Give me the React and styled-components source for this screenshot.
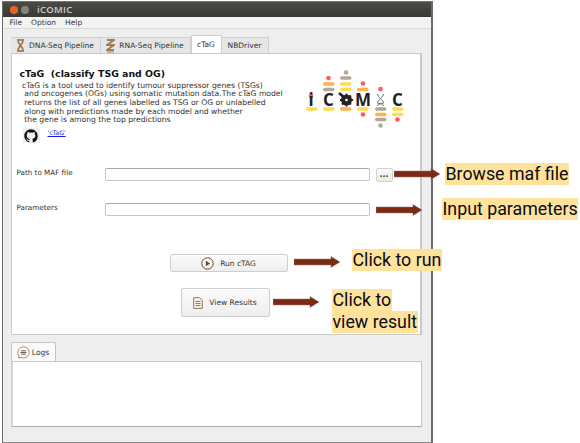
import React from "react";
import styled, { createGlobalStyle } from "styled-components";

const Global = createGlobalStyle`
  html, body { margin: 0; padding: 0; background: #fff; }
  body { width: 580px; height: 443px; overflow: hidden; font-family: "DejaVu Sans", sans-serif; position: relative; }
`;
const Page = styled.div`
  position: relative;
  width: 580px;
  height: 443px;
  padding: 1px 0 0 2px;
  box-sizing: border-box;
`;
const Win = styled.div`
  width: 431px;
  height: 442px;
  box-sizing: border-box;
  border-left: 1.5px solid #6b6b6b;
  border-right: 2.5px solid #6b6b6b;
  border-bottom: 1px solid #8a8a8a;
  background: #eeeeee;
  display: flex;
  flex-direction: column;
`;
const TitleBar = styled.div`
  height: 16px;
  flex: none;
  display: flex;
  align-items: center;
  background: linear-gradient(#4c4a44, #3a3934);
  border-top: 1px solid #77756f;
  box-sizing: border-box;
`;
const WinDot = styled.span`
  width: 8px;
  height: 8px;
  border-radius: 50%;
  background: ${(p) => p.$c};
  margin-left: ${(p) => p.$ml}px;
`;
const TitleText = styled.span`
  margin-left: 8px;
  color: #cfcdc5;
  font: 600 9.5px "Open Sans", sans-serif;
  letter-spacing: 0.3px;
`;
const MenuBar = styled.div`
  height: 11px;
  flex: none;
  display: flex;
  align-items: center;
  padding-left: 6.5px;
  gap: 9px;
  background: #f3f3f3;
  border-bottom: 1px solid #d8d8d8;
  font-size: 7.5px;
  color: #333;
`;
const Tabs = styled.div`
  display: flex;
  align-items: flex-end;
  height: 18px;
  margin: 6px 0 0 7.5px;
  flex: none;
`;
const Tab = styled.div`
  height: ${(p) => (p.$active ? 18 : 16)}px;
  width: ${(p) => p.$w}px;
  box-sizing: border-box;
  display: flex;
  align-items: center;
  justify-content: center;
  gap: 4px;
  font-size: 7.5px;
  color: #333;
  background: ${(p) => (p.$active ? "#fff" : "#e6e6e6")};
  border: 1px solid #cfcfcf;
  border-bottom: none;
  border-left: ${(p) => (p.$active ? "1px solid #cfcfcf" : "none")};
`;
const Panel = styled.div`
  height: 282px;
  margin: 0 9px 0 7.5px;
  flex: none;
  box-sizing: border-box;
  background: #fff;
  border: 1px solid #c9c9c9;
  border-right-width: 2px;
  display: flex;
  flex-direction: column;
`;
const Header = styled.div`
  display: flex;
  justify-content: space-between;
  height: 110px;
  padding: 14px 0 0 8px;
  box-sizing: border-box;
  flex: none;
`;
const Intro = styled.div`
  display: flex;
  flex-direction: column;
`;
const Heading = styled.div`
  font-size: 9.4px;
  font-weight: bold;
  line-height: 12px;
  color: #111;
  white-space: pre;
`;
const Desc = styled.div`
  font-size: 7.65px;
  line-height: 8.7px;
  color: #333;
  white-space: pre;
  margin-top: 1.5px;
`;
const RepoRow = styled.div`
  display: flex;
  align-items: flex-start;
  gap: 8px;
  margin: 3px 0 0 3px;
`;
const RepoIcon = styled.div`
  width: 17px;
  height: 15px;
  display: flex;
  align-items: center;
  justify-content: center;
  background: #efefef;
  border-radius: 1px;
`;
const RepoLink = styled.a`
  font-size: 6.2px;
  color: #1a1ae6;
  text-decoration: underline;
  margin-top: 1px;
`;
const Logo = styled.svg`
  width: 120px;
  height: 70px;
  margin: 0 1px 0 0;
  flex: none;
  position: relative;
  top: -7px;
`;
const Form = styled.div`
  display: flex;
  flex-direction: column;
  gap: 21px;
  margin-top: 4px;
  padding-left: 5px;
`;
const Row = styled.div`
  display: flex;
  align-items: flex-start;
`;
const Label = styled.div`
  width: 88px;
  font-size: 7.2px;
  line-height: 10px;
  color: #333;
`;
const Field = styled.div`
  width: 265px;
  height: 13px;
  box-sizing: border-box;
  background: #fff;
  border: 1px solid #c4c4c4;
  border-top-color: #aaa;
  border-radius: 2px;
`;
const Browse = styled.div`
  width: 17px;
  height: 14px;
  margin-left: 6px;
  box-sizing: border-box;
  border: 1px solid #d2d2d2;
  border-radius: 2px;
  background: linear-gradient(#fafafa, #ececec);
  font-size: 8px;
  font-weight: bold;
  color: #553b20;
  text-align: center;
  line-height: 12px;
`;
const Actions = styled.div`
  display: flex;
  flex-direction: column;
  align-items: flex-start;
  gap: 16px;
  margin-top: 38px;
`;
const Button = styled.div`
  width: ${(p) => p.$w}px;
  height: ${(p) => p.$h}px;
  margin-left: ${(p) => p.$ml}px;
  box-sizing: border-box;
  display: flex;
  align-items: center;
  justify-content: center;
  gap: 6px;
  font-size: 7.5px;
  color: #333;
  border: 1px solid #cfcfcf;
  border-radius: 2px;
  background: linear-gradient(#fbfbfb, #eeeeee);
`;
const LogTabs = styled.div`
  display: flex;
  margin: 7px 0 0 7.5px;
  flex: none;
`;
const LogTab = styled.div`
  width: 45px;
  height: 19px;
  box-sizing: border-box;
  display: flex;
  align-items: center;
  justify-content: center;
  gap: 2px;
  font-size: 7.5px;
  color: #333;
  background: #fafafa;
  border: 1px solid #c4c4c4;
  border-bottom: none;
  border-radius: 2px 2px 0 0;
`;
const LogPanel = styled.div`
  height: 66px;
  margin: 0 9px 0 7.5px;
  flex: none;
  box-sizing: border-box;
  background: #fff;
  border: 1px solid #c4c4c4;
  border-left: 2px solid #d4d4d4;
  border-top: 1px solid #c9c9c9;
  border-bottom-color: #aaa;
`;
const Note = styled.div`
  position: absolute;
  left: ${(p) => p.$x}px;
  top: ${(p) => p.$y}px;
  height: 21.5px;
  padding: 0 0.5px;
  background: #ffe29c;
  font: 400 17.8px/21.5px Roboto, sans-serif;
  color: #0a0a14;
  white-space: nowrap;
`;
const ArrowSvg = styled.svg`
  position: absolute;
  left: ${(p) => p.$x}px;
  top: ${(p) => p.$y}px;
  width: 46px;
  height: 12px;
`;

const Arrow = ({ x, y }) => (
  <ArrowSvg $x={x} $y={y} viewBox="0 0 46 12">
    <path d="M0 3H37V0.5L46 6L37 11.5V9H0Z" fill="#7c2a14" stroke="#8c7a70" strokeWidth="0.5" />
  </ArrowSvg>
);

const DnaIcon = () => (
  <svg width="9" height="13" viewBox="0 0 9 13">
    <path d="M1 1H8M1 12H8" stroke="#8a6a45" strokeWidth="1.6" />
    <path d="M2 2C2 5 7 8 7 11M7 2C7 5 2 8 2 11" stroke="#9a7040" strokeWidth="1.6" fill="none" />
  </svg>
);
const RnaIcon = () => (
  <svg width="9" height="15" viewBox="0 0 9 15">
    <path d="M1 2H8L1 7H8L1 12H8" stroke="#a67c52" strokeWidth="1.8" fill="none" />
    <path d="M1 14H8" stroke="#c8a07a" strokeWidth="1.5" />
  </svg>
);
const GitHub = () => (
  <svg width="14" height="14" viewBox="0 0 24 24">
    <path
      fill="#111"
      d="M12 .5C5.6.5.5 5.6.5 12c0 5.1 3.3 9.4 7.9 10.9.6.1.8-.2.8-.6v-2c-3.200.7-3.900-1.500-3.900-1.500-.5-1.300-1.300-1.700-1.300-1.700-1-.7.100-.7.100-.7 1.200.1 1.800 1.200 1.800 1.200 1 1.800 2.700 1.300 3.400 1 .1-.8.400-1.300.7-1.600-2.600-.3-5.300-1.300-5.300-5.700 0-1.300.5-2.300 1.200-3.100-.1-.3-.5-1.500.1-3.100 0 0 1-.3 3.200 1.200a11 11 0 0 1 5.800 0c2.200-1.500 3.200-1.200 3.200-1.200.6 1.600.2 2.800.1 3.100.7.8 1.200 1.900 1.200 3.100 0 4.400-2.700 5.400-5.300 5.700.4.400.8 1.100.8 2.200v3.300c0 .3.2.7.8.6A11.500 11.500 0 0 0 23.500 12C23.500 5.600 18.400.5 12 .5Z"
    />
  </svg>
);
const PlayIcon = () => (
  <svg width="13" height="13" viewBox="0 0 13 13">
    <circle cx="6.500" cy="6.500" r="5.700" fill="none" stroke="#6b4a2a" strokeWidth="1" />
    <path d="M4.800 3.700L9.200 6.500L4.800 9.300Z" fill="#6b4a2a" />
  </svg>
);
const DocIcon = () => (
  <svg width="10" height="12" viewBox="0 0 10 12">
    <path d="M0.700 0.600H6.500L9.300 3.400V11.400H0.700Z" fill="#f5efe6" stroke="#9a7a58" strokeWidth="1" />
    <path d="M2.500 4.500H7.500M2.500 6.500H7.500M2.500 8.500H7.500" stroke="#9a7a58" strokeWidth="1" />
  </svg>
);
const ChatIcon = () => (
  <svg width="13" height="13" viewBox="0 0 13 13">
    <path d="M6.500 0.800A5.600 5.600 0 1 1 4 11.300L1.300 12L2.100 10A5.600 5.600 0 0 1 6.500 0.800Z" fill="none" stroke="#a8703c" strokeWidth="0.800" />
    <path d="M4 4.800H9M3.500 6.500H9.500M4 8.200H9" stroke="#4a3a2a" strokeWidth="0.800" />
  </svg>
);

const bars = [
  [307, 108, "y"], [324, 83, "o"], [324, 88.5, "g"], [324, 108, "y"],
  [341, 77, "g"], [341, 83, "y"], [341, 88.5, "y"], [341, 108, "o"],
  [358, 88.5, "o"], [358, 108, "y"], [376, 108, "g"], [376, 113.5, "o"], [376, 118.5, "g"],
  [393, 108, "y"], [393, 113.5, "y"],
];
const dots = [
  [312, 95, "r"], [329.5, 77, "r"], [347, 71.5, "g"], [364, 82.5, "r"], [364, 113.5, "r"],
  [381.5, 88, "r"], [381.5, 124.5, "g"], [398.5, 118.5, "r"],
];
const tone = { y: "#ffdb4d", o: "#ffb347", g: "#b3a898", r: "#ff5a5f" };

const LogoMark = () => (
  <Logo viewBox="300 60 120 70">
    {bars.map(([x, y, c], i) => (
      <rect key={i} x={x} y={y - 1.7} width="11.500" height="3.400" rx="1.700" fill={tone[c]} />
    ))}
    {dots.map(([x, y, c], i) => (
      <circle key={i} cx={x} cy={y} r="2.300" fill={tone[c]} />
    ))}
    <g fontFamily="'Open Sans', sans-serif" fontWeight="700" fontSize="17" fill="#222" textAnchor="middle">
      <text x="312" y="105">i</text>
      <text x="329.500" y="105">C</text>
      <text x="364" y="105">M</text>
      <text x="398.500" y="105">C</text>
    </g>
    <g stroke="#222" fill="none">
      <circle cx="347.500" cy="99" r="4" strokeWidth="3" />
      <path d="M347.500 92.500V105.500M341 99H354M343 94.500L352 103.500M352 94.500L343 103.500" strokeWidth="1.800" />
      <path d="M340 92L346 97" strokeWidth="2.600" />
    </g>
    <circle cx="347.500" cy="99" r="1.300" fill="#fff" />
    <path d="M378.500 93C378.500 96 384.500 99 384.500 102C384.500 103 378.500 102 378.500 105M384.500 93C384.500 96 378.500 99 378.500 102C378.500 103 384.500 102 384.500 105" stroke="#555" strokeWidth="0.900" fill="none" />
  </Logo>
);

export default function App() {
  return (
    <Page>
      <Global />
      <Win>
        <TitleBar>
          <WinDot $c="#e8622a" $ml={7} />
          <WinDot $c="#85837c" $ml={3} />
          <TitleText>iCOMIC</TitleText>
        </TitleBar>
        <MenuBar>
          <span>File</span>
          <span>Option</span>
          <span>Help</span>
        </MenuBar>
        <Tabs>
          <Tab $w={90}><DnaIcon />DNA-Seq Pipeline</Tab>
          <Tab $w={90}><RnaIcon />RNA-Seq Pipeline</Tab>
          <Tab $w={31} $active>cTaG</Tab>
          <Tab $w={47}>NBDriver</Tab>
        </Tabs>
        <Panel>
          <Header>
            <Intro>
              <Heading>{"cTaG  (classify TSG and OG)"}</Heading>
              <Desc>{" cTaG is a tool used to identify tumour suppressor genes (TSGs)\n  and oncogenes (OGs) using somatic mutation data.The cTaG model\n  returns the list of all genes labelled as TSG or OG or unlabelled\n  along with predictions made by each model and whether\n  the gene is among the top predictions"}</Desc>
              <RepoRow>
                <RepoIcon><GitHub /></RepoIcon>
                <RepoLink href="#">'cTaG'</RepoLink>
              </RepoRow>
            </Intro>
            <LogoMark />
          </Header>
          <Form>
            <Row>
              <Label>Path to MAF file</Label>
              <Field />
              <Browse>...</Browse>
            </Row>
            <Row>
              <Label>Parameters</Label>
              <Field />
            </Row>
          </Form>
          <Actions>
            <Button $w={118} $h={18} $ml={158}><PlayIcon />Run cTAG</Button>
            <Button $w={89} $h={29} $ml={169}><DocIcon />View Results</Button>
          </Actions>
        </Panel>
        <LogTabs>
          <LogTab><ChatIcon />Logs</LogTab>
        </LogTabs>
        <LogPanel />
      </Win>
      <Arrow x={394} y={168} />
      <Arrow x={376} y={204} />
      <Arrow x={294} y={256} />
      <Arrow x={273} y={296} />
      <Note $x={445} $y={163}>Browse maf file</Note>
      <Note $x={442} $y={198}>Input parameters</Note>
      <Note $x={352} $y={249}>Click to run</Note>
      <Note $x={332} $y={289}>Click to</Note>
      <Note $x={332} $y={311}>view result</Note>
    </Page>
  );
}
